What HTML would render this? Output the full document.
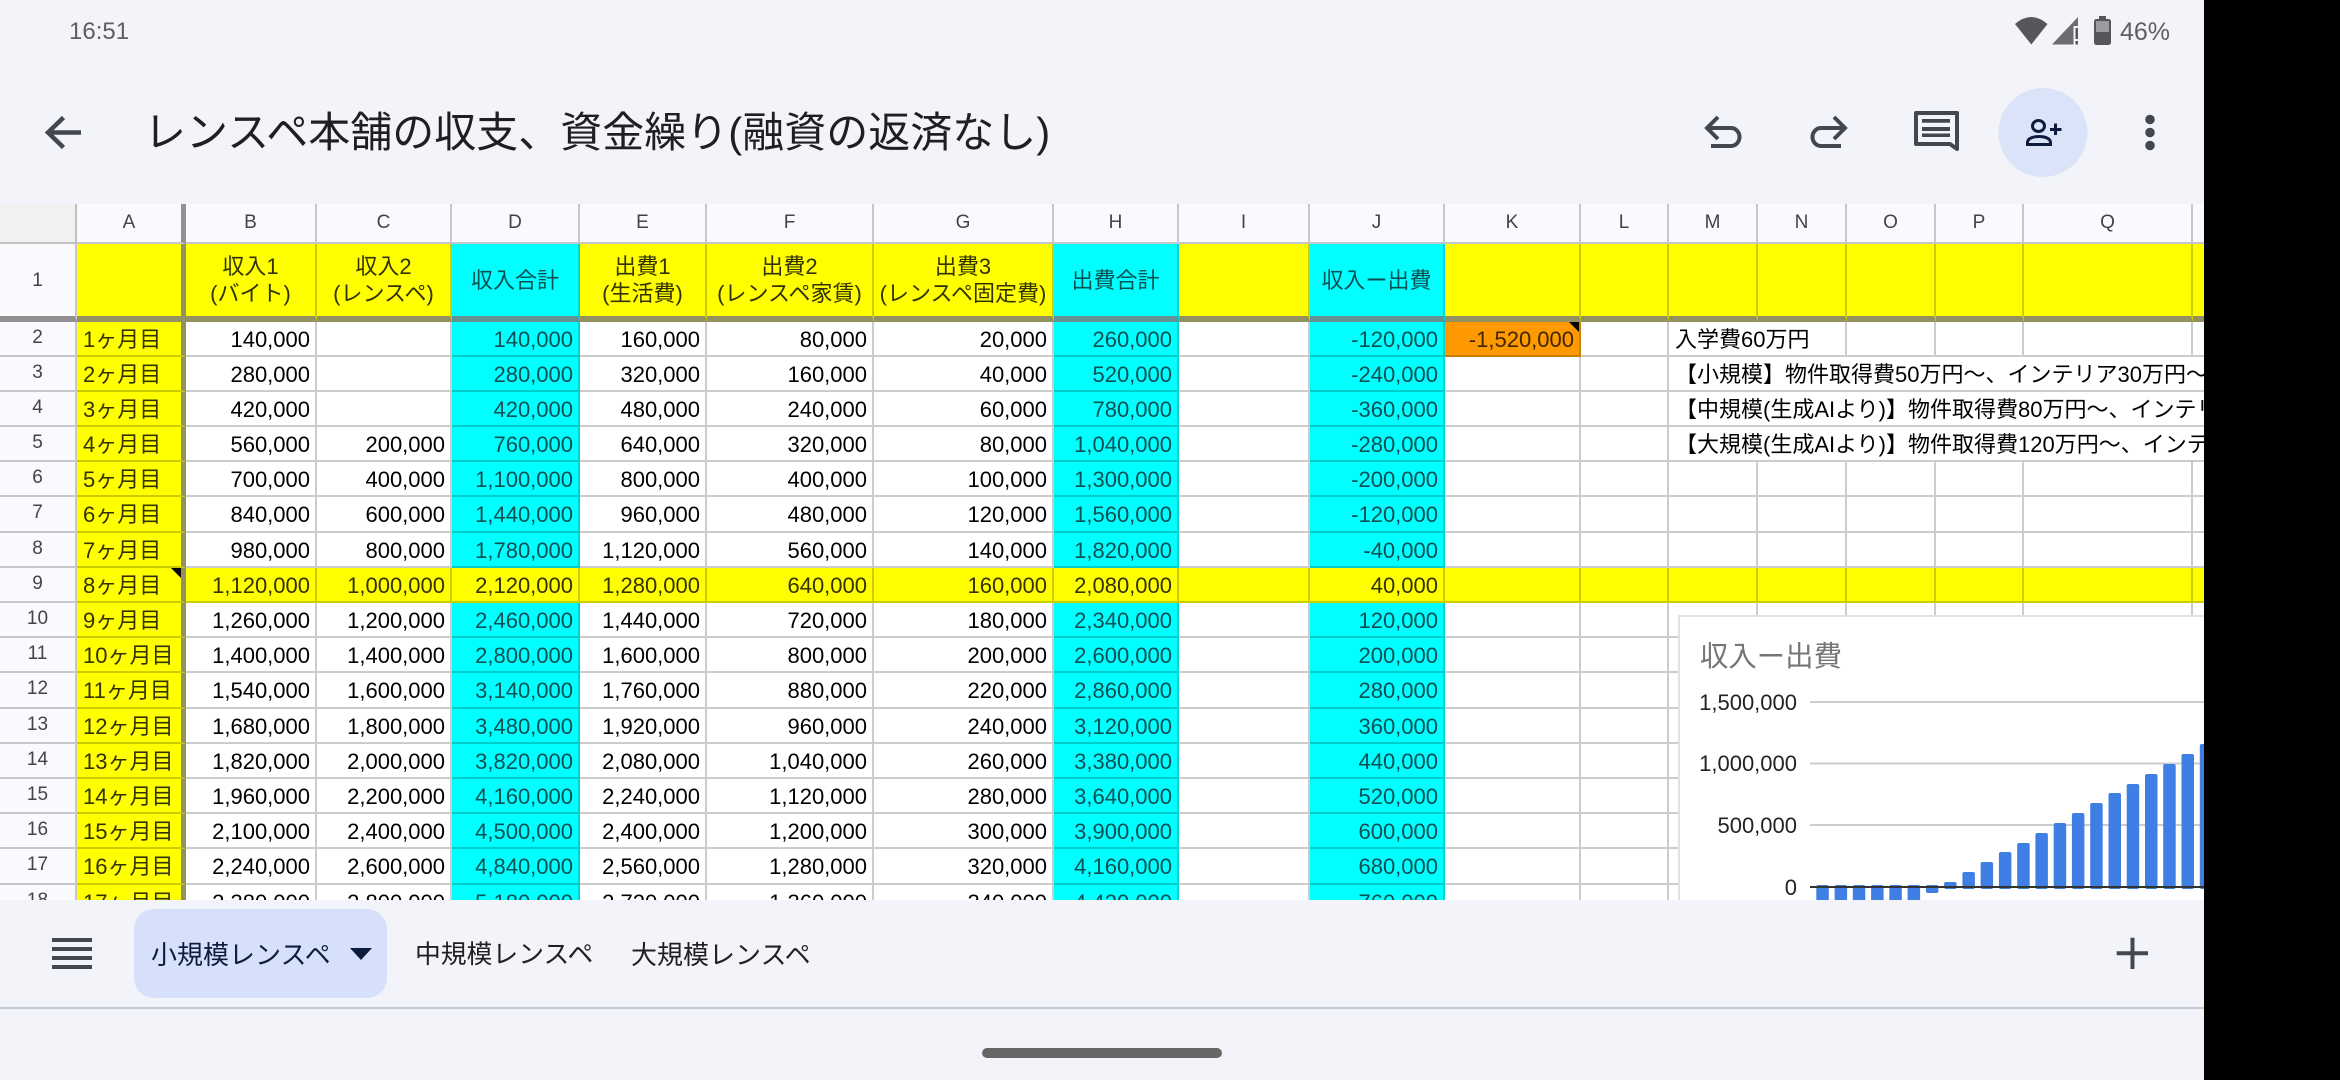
<!DOCTYPE html>
<html lang="ja">
<head>
<meta charset="utf-8">
<title>レンスペ本舗の収支、資金繰り(融資の返済なし)</title>
<style>
*{box-sizing:border-box}
html,body{margin:0;padding:0;width:2340px;height:1080px;overflow:hidden;background:#f3f4f9;font-family:"Liberation Sans","Noto Sans CJK JP",sans-serif;color:#000;text-spacing-trim:space-all}
.abs{position:absolute;white-space:nowrap}
#grid{position:absolute;left:0;top:204px;width:2204px;height:696px;overflow:hidden;background:#fff}
table{border-collapse:separate;border-spacing:0;table-layout:fixed;width:2300px;font-size:22px}
td,th{padding:2px 5px 0 0;border-right:2px solid rgba(0,0,0,.2);border-bottom:2px solid rgba(0,0,0,.2);text-align:right;font-weight:400;white-space:nowrap;overflow:hidden;line-height:30px;background-clip:border-box;vertical-align:middle}
tr{height:35px}
tr.t{height:36px}
tr.h{height:40px}
tr.one{height:78px}
th{background:#f9f9fe;color:#444;font-size:19px;text-align:center;padding:0}
tr.h th{line-height:36px}
th.corner{background:#f1f1f1}
tr:not(.h):not(.one) th{padding-bottom:2px}
tr.one th{padding-top:2px}
td.a{background:#ffff00;color:#333300;text-align:left;padding:2px 0 0 6px;border-right:5px solid rgba(120,120,120,.8)}
th.a{border-right:5px solid rgba(120,120,120,.8)}
td.y{background:#ffff00;color:#333300}
td.c{background:#00ffff;color:#0a5052}
td.c,td.o{border-right-color:rgba(0,60,60,.22)}
td.o{background:#ff9900;color:#402600}
td.m{text-align:left;padding:2px 0 0 6px}
tr.one td,tr.one th{border-bottom:6px solid rgba(120,120,120,.8)}
tr.one td{text-align:center;padding:0;line-height:27px}
tr.one td.a{padding:0}
.note{position:absolute;width:0;height:0;border-top:10px solid #000;border-left:10px solid transparent}
#bar{position:absolute;left:0;top:900px;width:2204px;height:180px;background:#f3f4f9}
#black{position:absolute;left:2204px;top:0;width:136px;height:1080px;background:#000}
</style>
</head>
<body>

<div class="abs" style="left:69px;top:18px;font-size:24px;line-height:27px;color:#5d5f65">16:51</div>
<div class="abs" style="left:144px;top:106px;font-size:42px;line-height:54px;color:#1e1f24">レンスペ本舗の収支、資金繰り(融資の返済なし)</div>
<div class="abs" style="left:2120px;top:18px;font-size:25px;line-height:28px;color:#5d5f65">46%</div>

<div id="grid">
<table>
<colgroup><col style="width:77px"><col style="width:109px"><col style="width:131px"><col style="width:135px"><col style="width:128px"><col style="width:127px"><col style="width:167px"><col style="width:180px"><col style="width:125px"><col style="width:131px"><col style="width:135px"><col style="width:136px"><col style="width:88px"><col style="width:89px"><col style="width:89px"><col style="width:89px"><col style="width:88px"><col style="width:169px"><col style="width:107px"></colgroup>
<tr class="h"><th class="corner"><th class="a">A<th>B<th>C<th>D<th>E<th>F<th>G<th>H<th>I<th>J<th>K<th>L<th>M<th>N<th>O<th>P<th>Q<th></tr>
<tr class="one"><th>1<td class="a"><td class="y">収入1<br>(バイト)<td class="y">収入2<br>(レンスペ)<td class="c">収入合計<td class="y">出費1<br>(生活費)<td class="y">出費2<br>(レンスペ家賃)<td class="y">出費3<br>(レンスペ固定費)<td class="c">出費合計<td class="y"><td class="c">収入ー出費<td class="y"><td class="y"><td class="y"><td class="y"><td class="y"><td class="y"><td class="y"><td class="y"></tr>
<tr><th>2<td class="a">1ヶ月目<td>140,000<td><td class="c">140,000<td>160,000<td>80,000<td>20,000<td class="c">260,000<td><td class="c">-120,000<td class="o">-1,520,000<td><td class="m" colspan="2">入学費60万円<td><td><td><td></tr>
<tr><th>3<td class="a">2ヶ月目<td>280,000<td><td class="c">280,000<td>320,000<td>160,000<td>40,000<td class="c">520,000<td><td class="c">-240,000<td><td><td class="m" colspan="6">【小規模】物件取得費50万円〜、インテリア30万円〜</tr>
<tr><th>4<td class="a">3ヶ月目<td>420,000<td><td class="c">420,000<td>480,000<td>240,000<td>60,000<td class="c">780,000<td><td class="c">-360,000<td><td><td class="m" colspan="6">【中規模(生成AIより)】物件取得費80万円〜、インテリア50万円〜</tr>
<tr><th>5<td class="a">4ヶ月目<td>560,000<td>200,000<td class="c">760,000<td>640,000<td>320,000<td>80,000<td class="c">1,040,000<td><td class="c">-280,000<td><td><td class="m" colspan="6">【大規模(生成AIより)】物件取得費120万円〜、インテリア80万円〜</tr>
<tr><th>6<td class="a">5ヶ月目<td>700,000<td>400,000<td class="c">1,100,000<td>800,000<td>400,000<td>100,000<td class="c">1,300,000<td><td class="c">-200,000<td><td><td><td><td><td><td><td></tr>
<tr class="t"><th>7<td class="a">6ヶ月目<td>840,000<td>600,000<td class="c">1,440,000<td>960,000<td>480,000<td>120,000<td class="c">1,560,000<td><td class="c">-120,000<td><td><td><td><td><td><td><td></tr>
<tr><th>8<td class="a">7ヶ月目<td>980,000<td>800,000<td class="c">1,780,000<td>1,120,000<td>560,000<td>140,000<td class="c">1,820,000<td><td class="c">-40,000<td><td><td><td><td><td><td><td></tr>
<tr><th>9<td class="a">8ヶ月目<td class="y">1,120,000<td class="y">1,000,000<td class="y">2,120,000<td class="y">1,280,000<td class="y">640,000<td class="y">160,000<td class="y">2,080,000<td class="y"><td class="y">40,000<td class="y"><td class="y"><td class="y"><td class="y"><td class="y"><td class="y"><td class="y"><td class="y"></tr>
<tr><th>10<td class="a">9ヶ月目<td>1,260,000<td>1,200,000<td class="c">2,460,000<td>1,440,000<td>720,000<td>180,000<td class="c">2,340,000<td><td class="c">120,000<td><td><td><td><td><td><td><td></tr>
<tr><th>11<td class="a">10ヶ月目<td>1,400,000<td>1,400,000<td class="c">2,800,000<td>1,600,000<td>800,000<td>200,000<td class="c">2,600,000<td><td class="c">200,000<td><td><td><td><td><td><td><td></tr>
<tr class="t"><th>12<td class="a">11ヶ月目<td>1,540,000<td>1,600,000<td class="c">3,140,000<td>1,760,000<td>880,000<td>220,000<td class="c">2,860,000<td><td class="c">280,000<td><td><td><td><td><td><td><td></tr>
<tr><th>13<td class="a">12ヶ月目<td>1,680,000<td>1,800,000<td class="c">3,480,000<td>1,920,000<td>960,000<td>240,000<td class="c">3,120,000<td><td class="c">360,000<td><td><td><td><td><td><td><td></tr>
<tr><th>14<td class="a">13ヶ月目<td>1,820,000<td>2,000,000<td class="c">3,820,000<td>2,080,000<td>1,040,000<td>260,000<td class="c">3,380,000<td><td class="c">440,000<td><td><td><td><td><td><td><td></tr>
<tr><th>15<td class="a">14ヶ月目<td>1,960,000<td>2,200,000<td class="c">4,160,000<td>2,240,000<td>1,120,000<td>280,000<td class="c">3,640,000<td><td class="c">520,000<td><td><td><td><td><td><td><td></tr>
<tr><th>16<td class="a">15ヶ月目<td>2,100,000<td>2,400,000<td class="c">4,500,000<td>2,400,000<td>1,200,000<td>300,000<td class="c">3,900,000<td><td class="c">600,000<td><td><td><td><td><td><td><td></tr>
<tr class="t"><th>17<td class="a">16ヶ月目<td>2,240,000<td>2,600,000<td class="c">4,840,000<td>2,560,000<td>1,280,000<td>320,000<td class="c">4,160,000<td><td class="c">680,000<td><td><td><td><td><td><td><td></tr>
<tr><th>18<td class="a">17ヶ月目<td>2,380,000<td>2,800,000<td class="c">5,180,000<td>2,720,000<td>1,360,000<td>340,000<td class="c">4,420,000<td><td class="c">760,000<td><td><td><td><td><td><td><td></tr>
</table>
<div class="note" style="left:171px;top:364px"></div>
<div class="note" style="left:1569px;top:118px"></div>
</div>

<svg class="abs" style="left:0;top:0" width="2204" height="900" viewBox="0 0 2204 900" font-family="'Liberation Sans','Noto Sans CJK JP',sans-serif">
<rect x="1679" y="616" width="560" height="300" fill="#fff" stroke="#e2e2e2" stroke-width="2"/>
<text x="1700" y="666" font-size="28.4" fill="#757575">収入ー出費</text>
<g font-size="22" fill="#222" text-anchor="end">
<text x="1797" y="710">1,500,000</text>
<text x="1797" y="771">1,000,000</text>
<text x="1797" y="833">500,000</text>
<text x="1797" y="895">0</text>
</g>
<g stroke="#cdcdcd" stroke-width="2"><path d="M1810 702H2204M1810 763.500H2204M1810 825H2204"/></g>
<g fill="#3f7fe3">
<rect x="1816.3" y="885" width="12.5" height="25" rx="2"/>
<rect x="1834.6" y="885" width="12.5" height="25" rx="2"/>
<rect x="1852.8" y="885" width="12.5" height="25" rx="2"/>
<rect x="1871.1" y="885" width="12.5" height="25" rx="2"/>
<rect x="1889.3" y="885" width="12.5" height="25" rx="2"/>
<rect x="1907.6" y="885" width="12.5" height="25" rx="2"/>
<rect x="1925.9" y="885" width="12.5" height="8" rx="2"/>
<rect x="1944.1" y="882" width="12.5" height="7" rx="2"/>
<rect x="1962.4" y="872" width="12.5" height="17" rx="2"/>
<rect x="1980.6" y="862" width="12.500" height="27" rx="2"/>
<rect x="1998.9" y="852" width="12.5" height="37" rx="2"/>
<rect x="2017.2" y="843" width="12.5" height="46" rx="2"/>
<rect x="2035.4" y="833" width="12.5" height="56" rx="2"/>
<rect x="2053.7" y="823" width="12.5" height="66" rx="2"/>
<rect x="2071.9" y="813" width="12.5" height="76" rx="2"/>
<rect x="2090.2" y="803" width="12.5" height="86" rx="2"/>
<rect x="2108.5" y="793" width="12.5" height="96" rx="2"/>
<rect x="2126.7" y="784" width="12.5" height="105" rx="2"/>
<rect x="2145" y="774" width="12.5" height="115" rx="2"/>
<rect x="2163.2" y="764" width="12.5" height="125" rx="2"/>
<rect x="2181.5" y="754" width="12.5" height="135" rx="2"/>
<rect x="2199.8" y="744" width="12.5" height="145" rx="2"/>
</g>
<path d="M1810 887H2204" stroke="#333" stroke-width="2"/>
</svg>

<div id="bar"></div>
<div class="abs" style="left:134px;top:909px;width:253px;height:89px;border-radius:20px;background:#d6e0fb"></div>
<div class="abs" style="left:151px;top:937px;font-size:26px;line-height:36px;color:#0d1c3d">小規模レンスペ</div>
<div class="abs" style="left:415px;top:937px;font-size:25.8px;line-height:36px;color:#1f2024">中規模レンスペ</div>
<div class="abs" style="left:631px;top:937px;font-size:26px;line-height:36px;color:#1f2024">大規模レンスペ</div>
<div class="abs" style="left:0;top:1007px;width:2204px;height:2px;background:#c4c7d8"></div>
<div class="abs" style="left:982px;top:1048px;width:240px;height:9.500px;border-radius:5px;background:#666"></div>

<svg class="abs" style="left:0;top:0" width="2204" height="1080" viewBox="0 0 2204 1080">
<!-- back -->
<path d="M81 132.500H49M63.500 117.500L48 132.500L63.500 147.500" fill="none" stroke="#44474f" stroke-width="4.500"/>
<!-- status -->
<path d="M2015 24Q2031 10 2047.500 24L2031.300 44.500Z" fill="#55575c"/>
<path d="M2078 17L2052 44.500H2073.500V26H2078Z" fill="#6a6c72"/>
<path d="M2075.500 28H2078V39H2075.500ZM2075.500 41H2078V44.500H2075.500Z" fill="#55575c"/>
<rect x="2099" y="16" width="7" height="4" fill="#55575c"/>
<rect x="2094" y="19" width="17" height="26" rx="2.500" fill="#55575c"/>
<rect x="2096" y="21" width="13" height="11" fill="#9a9ba0"/>
<!-- undo -->
<path d="M1718 117L1707 128L1718 139M1708 128H1731A8.500 9 0 0 1 1731 146H1711" fill="none" stroke="#44474f" stroke-width="4"/>
<!-- redo -->
<path d="M1834 117L1845 128L1834 139M1844 128H1821A8.500 9 0 0 0 1821 146H1841" fill="none" stroke="#44474f" stroke-width="4"/>
<!-- comment -->
<path d="M1916 113H1957V149L1950 144H1916Z" fill="none" stroke="#44474f" stroke-width="4" stroke-linejoin="round"/>
<path d="M1922 119H1950V122.700H1922ZM1922 127H1950V131H1922ZM1922 133.500H1950V137H1922Z" fill="#44474f"/>
<!-- add person -->
<circle cx="2043" cy="132.500" r="44.500" fill="#dbe3f8"/>
<ellipse cx="2038.500" cy="126" rx="6" ry="5.500" fill="none" stroke="#0d1c3d" stroke-width="3"/>
<path d="M2027.500 144.500V142.500C2027.500 138.500 2033 136.500 2039 136.500S2050.500 138.500 2050.500 142.500V144.500Z" fill="none" stroke="#0d1c3d" stroke-width="3"/>
<path d="M2050 129.500H2061.500M2055.500 123.500V135" fill="none" stroke="#0d1c3d" stroke-width="3"/>
<!-- more -->
<circle cx="2150" cy="119.500" r="4.800" fill="#44474f"/>
<circle cx="2150" cy="132.500" r="4.800" fill="#44474f"/>
<circle cx="2150" cy="145.500" r="4.800" fill="#44474f"/>
<!-- sheet list -->
<path d="M52 938H92V942H52ZM52 947H92V951H52ZM52 956H92V960H52ZM52 965H92V969H52Z" fill="#44474f"/>
<!-- dropdown -->
<path d="M350 948H372L361 960Z" fill="#0d1c3d"/>
<!-- plus -->
<path d="M2116.700 953.300H2148M2132.500 937.700V969" fill="none" stroke="#44474f" stroke-width="4"/>
</svg>

<div id="black"></div>
</body>
</html>
